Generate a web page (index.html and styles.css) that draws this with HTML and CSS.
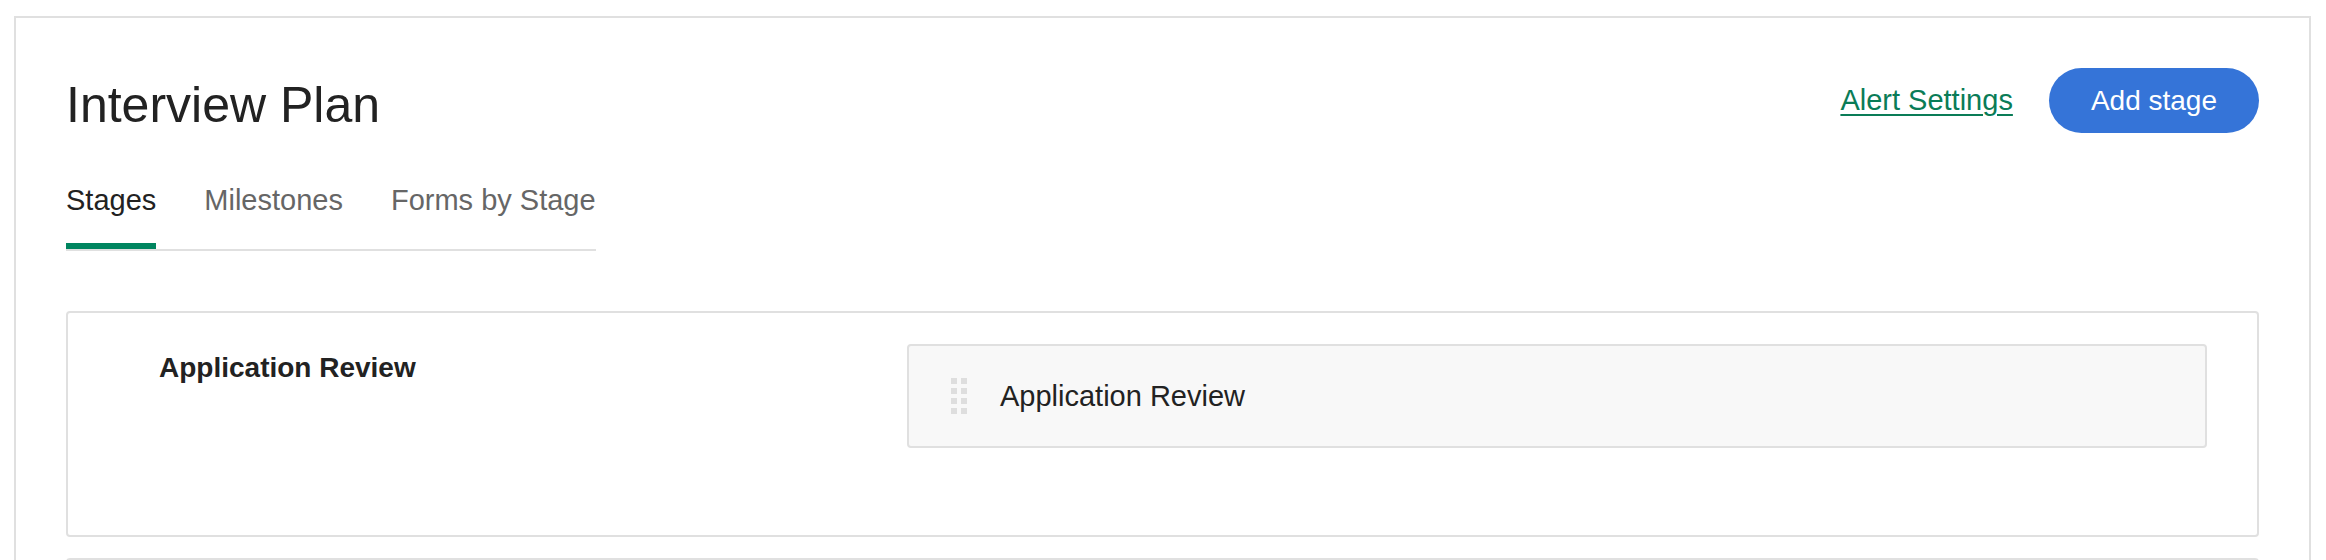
FILE: index.html
```html
<!DOCTYPE html>
<html lang="en">
<head>
    <meta charset="UTF-8">
    <meta name="viewport" content="width=device-width, initial-scale=1.0">
    <title>Interview Plan</title>
    <link rel="stylesheet" href="styles.css">
</head>
<body>
  <div class="panel">
    <header class="header">
      <h1 class="title">Interview Plan</h1>
      <div class="actions">
        <a href="#" class="link">Alert Settings</a>
        <button type="button" class="btn">Add stage</button>
      </div>
    </header>

    <nav class="tabs">
      <a href="#" class="tab active">Stages</a>
      <a href="#" class="tab">Milestones</a>
      <a href="#" class="tab">Forms by Stage</a>
    </nav>

    <section class="stages">
      <article class="stage">
        <h3 class="stage-name">Application Review</h3>
        <div class="stage-row">
          <svg class="handle" width="16" height="36" viewBox="0 0 16 36">
            <rect x="0" y="0" width="6" height="6"/><rect x="10" y="0" width="6" height="6"/>
            <rect x="0" y="10" width="6" height="6"/><rect x="10" y="10" width="6" height="6"/>
            <rect x="0" y="20" width="6" height="6"/><rect x="10" y="20" width="6" height="6"/>
            <rect x="0" y="30" width="6" height="6"/><rect x="10" y="30" width="6" height="6"/>
          </svg>
          <span>Application Review</span>
        </div>
      </article>
      <article class="stage"></article>
    </section>
  </div>
</body>
</html>
```

FILE: styles.css
```css
* {
  margin: 0;
  padding: 0;
  box-sizing: border-box;
}
html, body {
  height: 100%;
  background: #fff;
  font-family: "Liberation Sans", Arial, sans-serif;
  color: #222;
  overflow: hidden;
}
body {
  padding: 16px 15px 0 14px;
}
.panel {
  border: 2px solid #e0e0e0;
  padding: 0 50px;
  min-height: 700px;
}
.header {
  display: flex;
  justify-content: space-between;
  align-items: flex-start;
  padding-top: 50px;
}
.title {
  font-size: 50px;
  font-weight: normal;
  line-height: 75px;
  color: #222;
}
.actions {
  display: flex;
  align-items: center;
  gap: 36px;
}
.link {
  font-size: 29px;
  color: #0a7c57;
  text-decoration: underline;
  text-underline-offset: 4px;
  text-decoration-thickness: 2px;
}
.btn {
  border: none;
  background: #3574d8;
  color: #fff;
  font-family: inherit;
  font-size: 28px;
  height: 65px;
  padding: 0 42px;
  border-radius: 33px;
}
.tabs {
  display: inline-flex;
  gap: 48px;
  margin-top: 37px;
  border-bottom: 2px solid #e0e0e0;
}
.tab {
  font-size: 29px;
  line-height: 40px;
  color: #666;
  text-decoration: none;
  padding-bottom: 23px;
  border-bottom: 6px solid transparent;
}
.tab.active {
  color: #222;
  border-bottom-color: #00855f;
}
.stages {
  margin-top: 60px;
}
.stage {
  display: grid;
  grid-template-columns: 748px 1fr;
  border: 2px solid #e0e0e0;
  border-radius: 4px;
  padding: 31px 50px 87px 91px;
  margin-bottom: 21px;
  min-height: 226px;
}
.stage-name {
  font-size: 28px;
  font-weight: bold;
  padding-top: 8px;
}
.stage-row {
  display: flex;
  align-items: center;
  gap: 33px;
  height: 104px;
  padding-left: 42px;
  background: #f8f8f8;
  border: 2px solid #e0e0e0;
  border-radius: 4px;
  font-size: 29px;
}
.handle {
  fill: #dedede;
}
```
